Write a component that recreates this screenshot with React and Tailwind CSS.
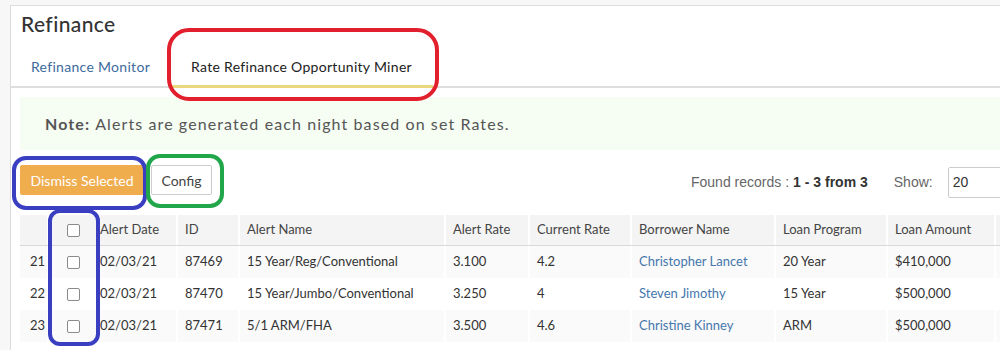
const rows = [
  { n: 21, date: '02/03/21', id: '87469', name: '15 Year/Reg/Conventional', alert: '3.100', current: '4.2', borrower: 'Christopher Lancet', program: '20 Year', amount: '$410,000' },
  { n: 22, date: '02/03/21', id: '87470', name: '15 Year/Jumbo/Conventional', alert: '3.250', current: '4', borrower: 'Steven Jimothy', program: '15 Year', amount: '$500,000' },
  { n: 23, date: '02/03/21', id: '87471', name: '5/1 ARM/FHA', alert: '3.500', current: '4.6', borrower: 'Christine Kinney', program: 'ARM', amount: '$500,000' },
]

const grid = 'grid grid-cols-[27px_50px_79px_62px_206px_84px_102px_144px_112px_108px_120px]'

function Box() {
  return <span className="block w-[13px] h-[13px] rounded-[2px] border border-[#8a8a8a] bg-white" />
}

export default function App() {
  return (
    <div className="relative w-[1000px] h-[350px] overflow-hidden bg-[#f7f7f7] font-['Lato',sans-serif] text-[#333]">
      {/* Card */}
      <div className="ml-[10px] mt-[5px] w-[1100px] h-[400px] bg-white border-t border-l border-[#dcdcdc]">
        {/* Header */}
        <div className="pl-[10px] pt-[4px] text-[21px] leading-[28px] tracking-[0.4px] font-medium text-[#333]">Refinance</div>
        <div className="mt-[6px] h-[44px] flex border-b-2 border-[#dedede] text-[14px] tracking-[0.3px]">
          <div className="h-[44px] -mb-[2px] px-[20px] pt-[3px] flex items-center text-[#3d6b9e] border-b-[3px] border-transparent">
            Refinance Monitor
          </div>
          <div className="ml-[2px] h-[44px] -mb-[2px] pl-[19px] pr-[21px] pt-[3px] flex items-center text-[#222] border-b-[3px] border-[#ead77e]">
            Rate Refinance Opportunity Miner
          </div>
        </div>

        {/* Content */}
        <div className="pl-[9px]">
          <div className="mt-[9px] h-[53px] bg-[#f6fdf3] flex items-center pl-[25px] text-[16px] tracking-[1.1px] text-[#555]">
            <span className="font-bold mr-[5px]">Note:</span>
            Alerts are generated each night based on set Rates.
          </div>

          <div className="mt-[15px] flex items-start h-[33px]">
            <button className="h-[30px] w-[124px] rounded-[2px] bg-[#f0ad4e] text-white text-[14px]">Dismiss Selected</button>
            <button className="ml-[7px] h-[30px] w-[61px] rounded-[2px] border border-[#ccc] bg-white text-[14px] text-[#444]">Config</button>
            <div className="ml-[479px] h-[34px] flex items-center font-['Liberation_Sans',sans-serif] text-[14px] text-[#666]">
              Found records :<span className="ml-[4px] font-bold text-[#333]">1 - 3 from 3</span>
            </div>
            <div className="ml-[26px] h-[34px] flex items-center font-['Liberation_Sans',sans-serif] text-[14px] text-[#666]">Show:</div>
            <div className="ml-[15px] mt-[2px] h-[31px] w-[90px] border border-[#ccc] rounded-[2px] flex items-center pl-[4px] font-['Liberation_Sans',sans-serif] text-[14px] text-[#333]">20</div>
          </div>

          {/* Table */}
          <div className="mt-[17px] text-[13px]">
            <div className={`${grid} h-[31px] bg-[#f4f4f4] border-b border-[#d9d9d9] text-[#444]`}>
              <div />
              <div className="flex items-center pl-[18px] border-l-2 border-white"><Box /></div>
              <div className="flex items-center pl-[3px]">Alert Date</div>
              <div className="flex items-center pl-[7px] border-l-2 border-white">ID</div>
              <div className="flex items-center pl-[7px] border-l-2 border-white">Alert Name</div>
              <div className="flex items-center pl-[7px] border-l-2 border-white">Alert Rate</div>
              <div className="flex items-center pl-[7px] border-l-2 border-white">Current Rate</div>
              <div className="flex items-center pl-[7px] border-l-2 border-white">Borrower Name</div>
              <div className="flex items-center pl-[7px] border-l-2 border-white">Loan Program</div>
              <div className="flex items-center pl-[7px] border-l-2 border-white">Loan Amount</div>
              <div className="border-l-2 border-white" />
            </div>
            {rows.map((r, i) => (
              <div key={r.n} className={`${grid} h-[32px] ${i % 2 === 0 ? 'bg-[#fafafa]' : 'bg-white'}`}>
                <div className="flex items-center justify-end pr-[2px]">{r.n}</div>
                <div className="flex items-center pl-[18px] border-l-2 border-white"><Box /></div>
                <div className="flex items-center pl-[3px]">{r.date}</div>
                <div className="flex items-center pl-[7px] border-l-2 border-white">{r.id}</div>
                <div className="flex items-center pl-[7px] border-l-2 border-white">{r.name}</div>
                <div className="flex items-center pl-[7px] border-l-2 border-white">{r.alert}</div>
                <div className="flex items-center pl-[7px] border-l-2 border-white">{r.current}</div>
                <div className="flex items-center pl-[7px] border-l-2 border-white text-[#4577ad]">{r.borrower}</div>
                <div className="flex items-center pl-[7px] border-l-2 border-white">{r.program}</div>
                <div className="flex items-center pl-[7px] border-l-2 border-white">{r.amount}</div>
                <div className="border-l-2 border-white" />
              </div>
            ))}
          </div>
        </div>
      </div>

      {/* Annotation marks drawn over the screenshot */}
      <div className="absolute left-[167px] top-[28px] w-[272px] h-[73px] rounded-[22px] border-[4px] border-[#e21f2c]" />
      <div className="absolute left-[12px] top-[156px] w-[135px] h-[54px] rounded-[14px] border-[4px] border-[#3a3fc2]" />
      <div className="absolute left-[146px] top-[154px] w-[78px] h-[54px] rounded-[14px] border-[4px] border-[#22a64a]" />
      <div className="absolute left-[48px] top-[209px] w-[52px] h-[137px] rounded-[12px] border-[4px] border-[#3a3fc2]" />
    </div>
  )
}
